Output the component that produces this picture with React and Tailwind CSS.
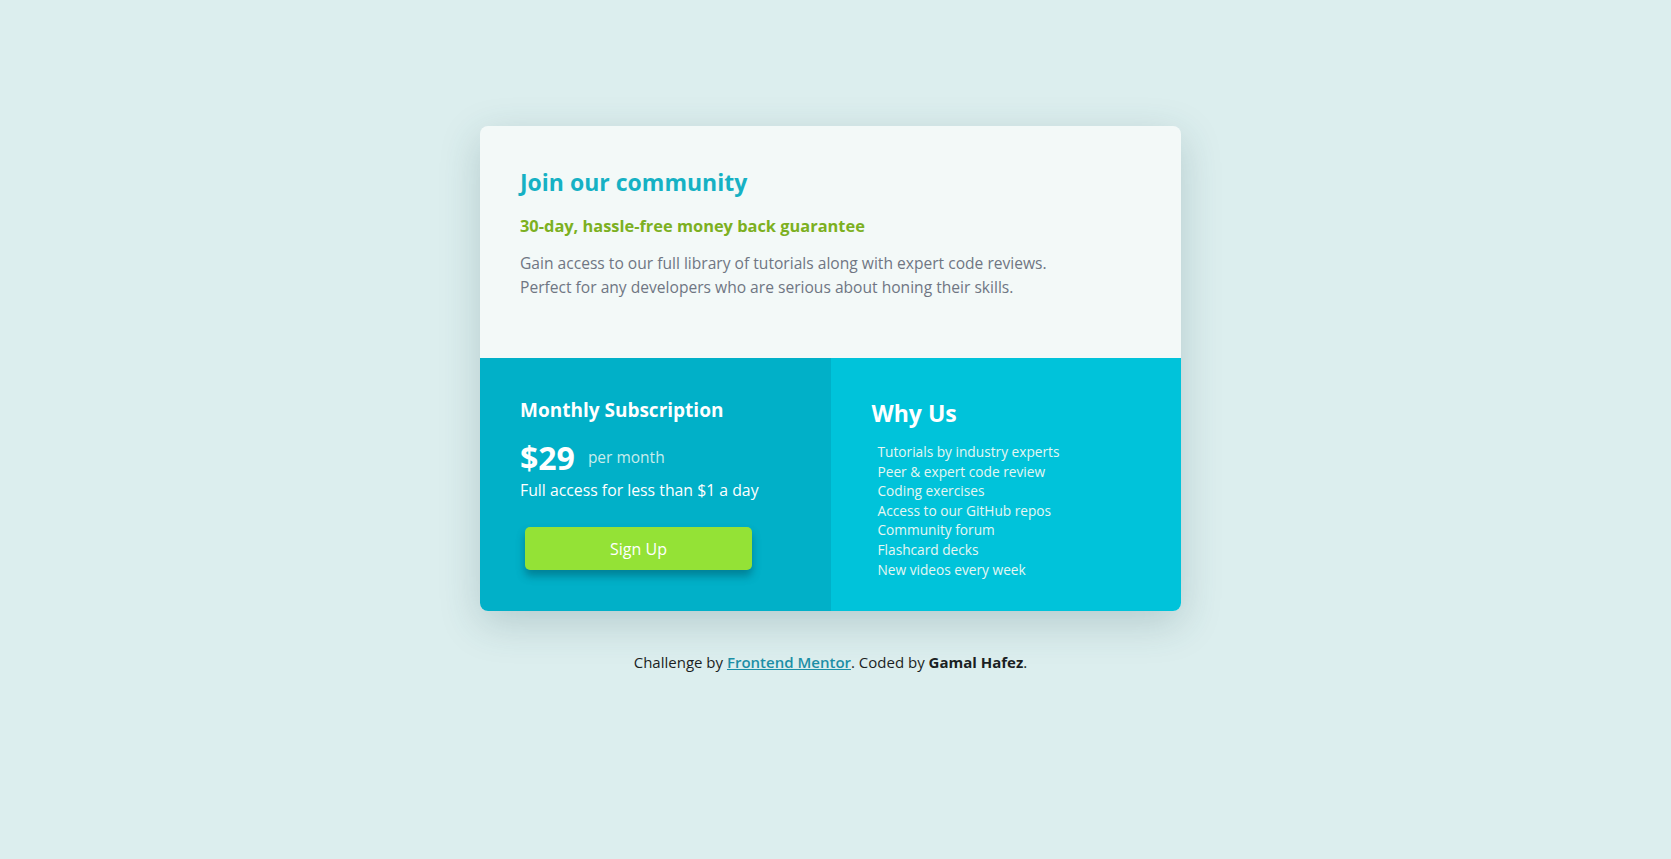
const features = [
  "Tutorials by industry experts",
  "Peer & expert code review",
  "Coding exercises",
  "Access to our GitHub repos",
  "Community forum",
  "Flashcard decks",
  "New videos every week",
]

const App = () => {
  return (
    <div className="min-h-screen w-full bg-[#dceeee] font-['Open_Sans','Noto_Sans',sans-serif] flex flex-col items-center pt-[126px] pr-[10px]">
      <main className="w-[701px] rounded-lg overflow-hidden bg-[#f3f9f8] shadow-[0_12px_40px_rgba(40,80,90,0.22)]">
        <section className="h-[232px] px-[40px] pt-[40px]">
          <h1 className="text-[23px] leading-[32px] font-bold text-[#16b1c4]">Join our community</h1>
          <h2 className="mt-[16px] text-[16.4px] leading-[24px] font-bold text-[#7cb021]">30-day, hassle-free money back guarantee</h2>
          <p className="mt-[13px] text-[15.6px] leading-[24px] text-[#6f7683]">
            Gain access to our full library of tutorials along with expert code reviews.
            <br />
            Perfect for any developers who are serious about honing their skills.
          </p>
        </section>

        <section className="grid grid-cols-2 h-[253px]">
          <div className="bg-[#01b0c8] px-[40px] pt-[38px] text-white">
            <h3 className="text-[19px] leading-[28px] font-bold">Monthly Subscription</h3>
            <div className="mt-[14px] flex items-center gap-[13px] h-[40px]">
              <span className="text-[32px] font-bold leading-none">$29</span>
              <span className="text-[15.5px] text-[#c8ecec]">per month</span>
            </div>
            <p className="text-[15.8px] leading-[24px]">Full access for less than $1 a day</p>
            <button className="mt-[25px] ml-[5px] w-[227px] h-[43px] rounded-[5px] bg-[#94e236] text-white text-[16px] font-medium shadow-[0_6px_8px_rgba(0,70,90,0.45)]">
              Sign Up
            </button>
          </div>

          <div className="bg-[#00c3da] px-[41px] pt-[38px] text-white">
            <h3 className="text-[23px] leading-[34px] font-bold">Why Us</h3>
            <ul className="mt-[12px] pl-[6px] text-[13.7px] leading-[19.6px] text-[#e6f7f3]">
              {features.map((item) => (
                <li key={item}>{item}</li>
              ))}
            </ul>
          </div>
        </section>
      </main>

      <footer className="mt-[40px] text-[15px] text-[#1b1f23]">
        Challenge by{" "}
        <a href="#" className="underline font-semibold text-[#1c8fa6]">Frontend Mentor</a>
        . Coded by <span className="font-bold">Gamal Hafez</span>.
      </footer>
    </div>
  )
}

export default App
